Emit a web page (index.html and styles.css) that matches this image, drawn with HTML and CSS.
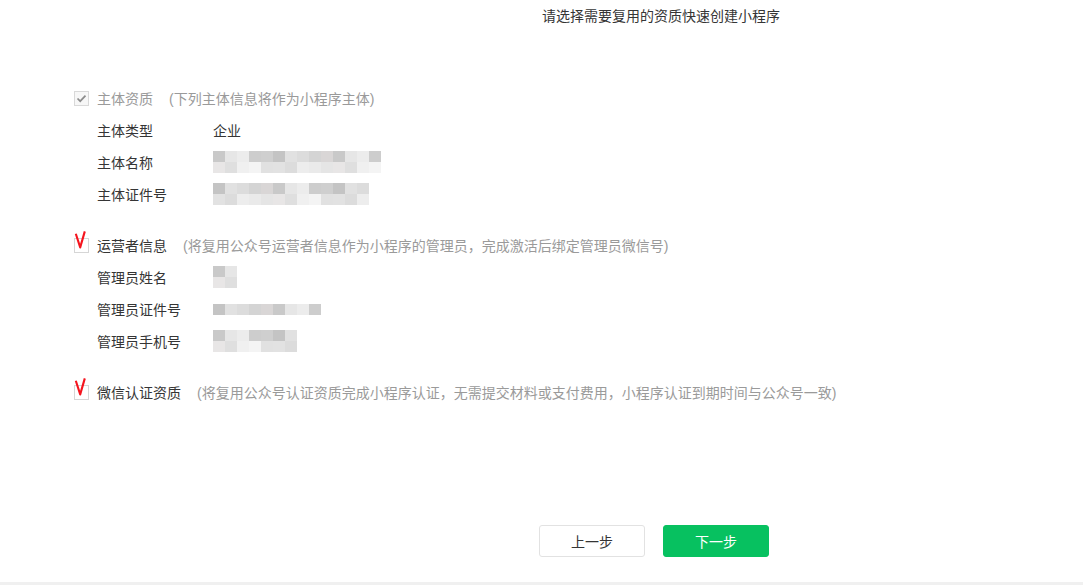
FILE: index.html
```html
<!DOCTYPE html>
<html>
<head>
<meta charset="utf-8">
<title>复用资质创建小程序</title>
<link rel="stylesheet" href="styles.css">
</head>
<body>
<div class="page">
    <div class="title">请选择需要复用的资质快速创建小程序</div>

    <div class="section">
        <div class="section-head">
            <span class="check disabled">
                <svg width="15" height="15" viewBox="0 0 15 15"><rect x="0.5" y="0.5" width="14" height="14" fill="#f7f7f7" stroke="#d9d9d9"/><path d="M3.5 7.5 L6.2 10.2 L11.5 4.6" fill="none" stroke="#8c8c8c" stroke-width="1.7"/></svg>
            </span>
            <span class="head-label grey">主体资质</span>
            <span class="tip">(下列主体信息将作为小程序主体)</span>
        </div>
        <div class="row"><span class="label">主体类型</span><span class="value">企业</span></div>
        <div class="row"><span class="label">主体名称</span><span class="mosaic" data-w="14" data-r="2"></span></div>
        <div class="row"><span class="label">主体证件号</span><span class="mosaic" data-w="13" data-r="2"></span></div>
    </div>

    <div class="section">
        <div class="section-head">
            <span class="check">
                <svg width="15" height="15" viewBox="0 0 15 15"><rect x="0.5" y="0.5" width="14" height="14" fill="#fff" stroke="#d6d6d6"/></svg>
                <svg class="tick" width="15" height="20" viewBox="0 0 15 20"><path d="M1.8 3.8 L6.2 17.4 L10.8 1.4" fill="none" stroke="#f5141e" stroke-width="2.1" stroke-linejoin="round"/></svg>
            </span>
            <span class="head-label">运营者信息</span>
            <span class="tip">(将复用公众号运营者信息作为小程序的管理员，完成激活后绑定管理员微信号)</span>
        </div>
        <div class="row"><span class="label">管理员姓名</span><span class="mosaic" data-w="2" data-r="2"></span></div>
        <div class="row"><span class="label">管理员证件号</span><span class="mosaic" data-w="9" data-r="1"></span></div>
        <div class="row"><span class="label">管理员手机号</span><span class="mosaic" data-w="7" data-r="2"></span></div>
    </div>

    <div class="section">
        <div class="section-head">
            <span class="check">
                <svg width="15" height="15" viewBox="0 0 15 15"><rect x="0.5" y="0.5" width="14" height="14" fill="#fff" stroke="#d6d6d6"/></svg>
                <svg class="tick" width="15" height="20" viewBox="0 0 15 20"><path d="M1.8 3.8 L6.2 17.4 L10.8 1.4" fill="none" stroke="#f5141e" stroke-width="2.1" stroke-linejoin="round"/></svg>
            </span>
            <span class="head-label">微信认证资质</span>
            <span class="tip">(将复用公众号认证资质完成小程序认证，无需提交材料或支付费用，小程序认证到期时间与公众号一致)</span>
        </div>
    </div>

    <div class="actions">
        <button class="btn">上一步</button>
        <button class="btn primary">下一步</button>
    </div>
</div>
<div class="bottom-bar"></div>

<script>
  // blurred info, drawn as grey blocks
  var greys = ['#c9c9c9', '#dcdcdc', '#cfcfcf', '#e6e6e6', '#d4d4d4', '#c4c4c4', '#ececec', '#d9d6d6', '#e1e1e1', '#cdcdcd'];
  var blocks = document.querySelectorAll('.mosaic');
  for (var i = 0; i < blocks.length; i++) {
      var w = parseInt(blocks[i].getAttribute('data-w'));
      var r = parseInt(blocks[i].getAttribute('data-r'));
      for (var y = 0; y < r; y++) {
          var line = document.createElement('div');
          line.className = 'mosaic-line';
          for (var x = 0; x < w; x++) {
              var c = document.createElement('span');
              c.style.background = greys[(x * 3 + y * 7 + i * 5) % greys.length];
              if (y == 1) c.style.opacity = '0.6';
              line.appendChild(c);
          }
          blocks[i].appendChild(line);
      }
  }
</script>
</body>
</html>
```

FILE: styles.css
```css
body {
    margin: 0;
    background: #fff;
    font-family: "Liberation Sans", "Noto Sans CJK SC", sans-serif;
    font-size: 14px;
    color: #353535;
}

.page {
    height: 582px;
}

.title {
    line-height: 32px;
    padding-left: 542px;
    margin-bottom: 50px;
}

.section {
    padding-left: 74px;
    margin-bottom: 19px;
}

.section-head {
    display: flex;
    align-items: center;
    height: 32px;
}

.check {
    position: relative;
    width: 15px;
    height: 15px;
    margin-right: 8px;
}

.check svg {
    display: block;
}

.check .tick {
    position: absolute;
    left: 0;
    top: -8px;
    z-index: 1;
}

.head-label.grey {
    color: #9a9a9a;
}

.tip {
    margin-left: 16px;
    color: #9a9a9a;
}

.row {
    display: flex;
    align-items: center;
    height: 32px;
    padding-left: 23px;
}

.label {
    width: 116px;
}

.mosaic {
    display: flex;
    flex-direction: column;
    filter: blur(0.6px);
}

.mosaic-line {
    display: flex;
}

.mosaic-line span {
    display: block;
    width: 12px;
    height: 11px;
}

.actions {
    display: flex;
    gap: 18px;
    padding-left: 539px;
    margin-top: 117px;
}

.btn {
    width: 106px;
    height: 32px;
    border: 1px solid #e2e2e2;
    border-radius: 3px;
    background: #fff;
    color: #353535;
    font-family: "Liberation Sans", "Noto Sans CJK SC", sans-serif;
    font-size: 14px;
}

.btn.primary {
    background: #07c160;
    border-color: #07c160;
    color: #fff;
}

.bottom-bar {
    height: 3px;
    background: #f0f0f0;
}
```
